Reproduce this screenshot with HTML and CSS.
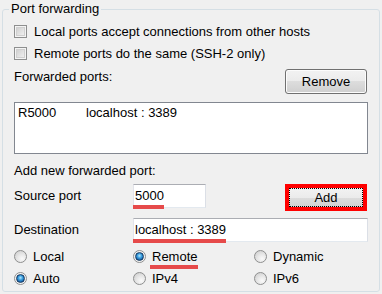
FILE: index.html
```html
<!DOCTYPE html>
<html lang="en">
<head>
    <meta charset="UTF-8">
    <title>Port forwarding</title>
    <link rel="stylesheet" href="styles.css">
</head>
<body>
    <fieldset class="group">
        <legend>Port forwarding</legend>

        <div class="check-row"><span class="checkbox"></span>Local ports accept connections from other hosts</div>
        <div class="check-row second"><span class="checkbox"></span>Remote ports do the same (SSH-2 only)</div>

        <div class="list-head">
            <span class="list-title">Forwarded ports:</span>
            <div class="button">Remove</div>
        </div>
        <div class="listbox">
            <div class="list-item"><span class="col-port">R5000</span><span>localhost : 3389</span></div>
        </div>

        <div class="section-label">Add new forwarded port:</div>

        <div class="field-row">
            <span class="field-label">Source port</span>
            <div class="textbox short"><span class="mark">5000</span></div>
            <div class="button add">Add</div>
        </div>
        <div class="field-row dest">
            <span class="field-label">Destination</span>
            <div class="textbox wide"><span class="mark">localhost : 3389</span></div>
        </div>

        <div class="radio-grid">
            <div class="radio-row"><span class="radio"></span>Local</div>
            <div class="radio-row"><span class="radio checked"></span><span class="mark">Remote</span></div>
            <div class="radio-row"><span class="radio"></span>Dynamic</div>
            <div class="radio-row"><span class="radio checked"></span>Auto</div>
            <div class="radio-row"><span class="radio"></span>IPv4</div>
            <div class="radio-row"><span class="radio"></span>IPv6</div>
        </div>
    </fieldset>
</body>
</html>
```

FILE: styles.css
```css
body {
    margin: 0;
    background-color: #f0f0f0;
    font-family: "Liberation Sans", Arial, sans-serif;
    font-size: 13px;
    color: #000;
}
.group {
    margin: 0 2px;
    padding: 2px 11px 2px 11px;
    border: 1px solid #d5dfe5;
    border-radius: 3px;
}
.group legend {
    margin-left: -5px;
    padding: 0 2px;
    line-height: 18px;
}
.check-row {
    display: flex;
    align-items: center;
    height: 22px;
}
.check-row.second {
    height: 23px;
}
.checkbox {
    width: 13px;
    height: 13px;
    box-sizing: border-box;
    margin-right: 7px;
    border: 1px solid #8e8f8f;
    background: linear-gradient(135deg, #c9c9c9, #f7f7f7);
    box-shadow: inset 0 0 0 1px #f4f4f4, inset 0 0 0 2px #d0d0d0;
}
.list-head {
    display: flex;
    align-items: flex-start;
    justify-content: space-between;
    margin-top: 4px;
}
.list-title {
    line-height: 16px;
}
.button {
    width: 82px;
    height: 25px;
    box-sizing: border-box;
    margin-right: 1px;
    border: 1px solid #707070;
    border-radius: 3px;
    background: linear-gradient(#f2f2f2 0%, #ebebeb 50%, #dddddd 50%, #cfcfcf 100%);
    box-shadow: inset 0 0 0 1px #fcfcfc;
    text-align: center;
    line-height: 23px;
}
.button.add {
    height: 27px;
    margin-left: auto;
    border: 4px solid #ff0000;
    border-radius: 0;
    outline: 1px dotted #000;
    outline-offset: -5px;
    box-shadow: none;
    background: linear-gradient(#f2f2f2 0%, #ebebeb 50%, #dddddd 50%, #d0d0d0 100%);
    line-height: 19px;
}
.listbox {
    height: 52px;
    box-sizing: border-box;
    margin-top: 8px;
    padding: 2px 3px;
    border: 1px solid #828790;
    background: #fff;
}
.list-item {
    display: flex;
    line-height: 16px;
}
.col-port {
    width: 68px;
}
.section-label {
    margin-top: 9px;
    line-height: 16px;
}
.field-row {
    display: flex;
    align-items: flex-start;
    margin-top: 5px;
}
.field-row.dest {
    margin-top: 7px;
}
.field-label {
    width: 119px;
    line-height: 24px;
}
.textbox {
    height: 24px;
    box-sizing: border-box;
    padding-left: 1px;
    border: 1px solid;
    border-color: #abadb3 #dbdfe6 #e3e9ef #e2e3ea;
    background: #fff;
    line-height: 22px;
}
.textbox.short {
    width: 73px;
}
.textbox.wide {
    flex: 1;
}
.mark {
    position: relative;
}
.mark::after {
    content: "";
    position: absolute;
    left: -2px;
    right: 0;
    bottom: -5px;
    height: 4px;
    background: #e64a4a;
}
.textbox .mark::after {
    left: -2px;
    bottom: -6px;
}
.radio-grid {
    display: grid;
    grid-template-columns: 119px 121px 1fr;
    margin-top: 3px;
}
.radio-row {
    display: flex;
    align-items: center;
    height: 22px;
}
.radio {
    position: relative;
    width: 13px;
    height: 13px;
    box-sizing: border-box;
    margin-right: 6px;
    border: 1px solid #8e8f8f;
    border-radius: 50%;
    background: radial-gradient(circle at 65% 70%, #fafafa 0, #e6e6e6 45%, #c8c8c8 100%);
}
.radio.checked {
    background: #f4f4f4;
}
.radio.checked::after {
    content: "";
    position: absolute;
    left: 1px;
    top: 1px;
    width: 9px;
    height: 9px;
    box-sizing: border-box;
    border-radius: 50%;
    border: 1px solid #17395f;
    background: radial-gradient(circle at 50% 40%, #b6e8fc 0, #3a9ede 40%, #1560a8 75%, #0e3f73 100%);
}
```
